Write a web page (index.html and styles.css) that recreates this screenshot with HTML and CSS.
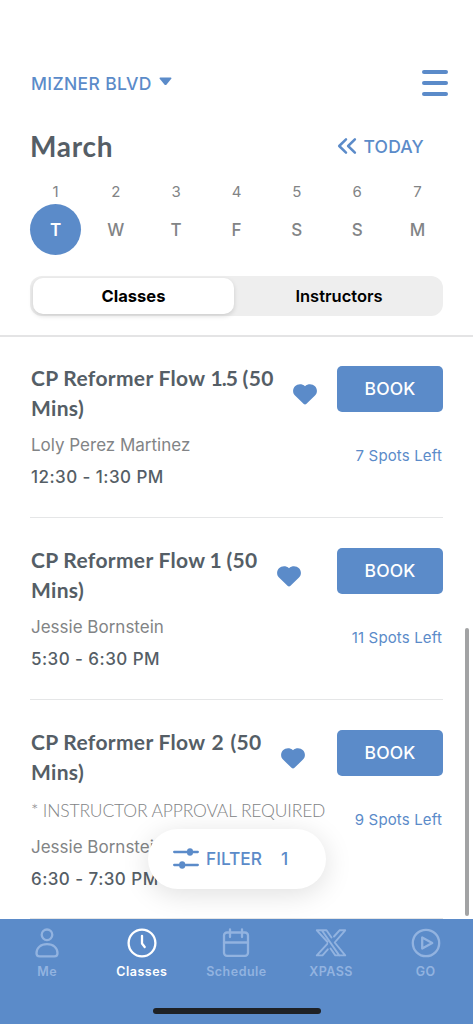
FILE: index.html
```html
<!DOCTYPE html>
<html lang="en">
<head>
<meta charset="utf-8">
<meta name="viewport" content="width=device-width, initial-scale=1">
<title>Classes</title>
<link rel="stylesheet" href="styles.css">
</head>
<body>
<div class="screen">
  <header class="header">
    <div class="topbar">
      <div class="location"><span>MIZNER BLVD</span>
        <svg class="caret" width="13" height="9" viewBox="0 0 13 9"><path d="M1.2 0.5H11.8Q13 0.8 12.3 1.8L7.6 7.4Q6.5 8.4 5.4 7.4L0.7 1.8Q0 0.8 1.2 0.5Z" fill="currentColor"/></svg>
      </div>
      <div class="burger"><i></i><i></i><i></i></div>
    </div>
    <div class="monthbar">
      <h1 class="month">March</h1>
      <div class="today">
        <svg width="20" height="18" viewBox="0 0 20 18" fill="none" stroke="currentColor" stroke-width="2.5" stroke-linecap="round" stroke-linejoin="round"><path d="M9 2.3L2.2 9L9 15.7M17.9 2.3L11.1 9L17.9 15.7"/></svg>
        <span>TODAY</span>
      </div>
    </div>
    <div class="days">
      <div class="day selected"><span class="num">1</span><span class="letter">T</span></div>
      <div class="day"><span class="num">2</span><span class="letter">W</span></div>
      <div class="day"><span class="num">3</span><span class="letter">T</span></div>
      <div class="day"><span class="num">4</span><span class="letter">F</span></div>
      <div class="day"><span class="num">5</span><span class="letter">S</span></div>
      <div class="day"><span class="num">6</span><span class="letter">S</span></div>
      <div class="day"><span class="num">7</span><span class="letter">M</span></div>
    </div>
    <div class="segmented"><span class="seg active">Classes</span><span class="seg">Instructors</span></div>
  </header>

  <main class="list">
    <article class="row">
      <div class="info">
        <div class="heading"><h2 class="title">CP Reformer Flow <span class="level">1.5</span> (50<br>Mins)</h2>
          <svg class="heart" width="24" height="21" viewBox="0 0 24 21"><path d="M12 2.200C9-.6 4.500-.3 2 2.300C-.5 5-.6 9 2 11.600L10.500 19.800Q12 21 13.500 19.800L22 11.600C24.600 9 24.500 5 22 2.300C19.500-.3 15-.6 12 2.200Z" fill="currentColor"/></svg></div>
        <p class="teacher">Loly Perez Martinez</p>
        <p class="time">12:30 - 1:30 PM</p>
      </div>
      <div class="side"><button class="book">BOOK</button><span class="spots">7 Spots Left</span></div>
    </article>
    <article class="row">
      <div class="info">
        <div class="heading"><h2 class="title">CP Reformer Flow <span class="one">1</span> (50<br>Mins)</h2>
          <svg class="heart" width="24" height="21" viewBox="0 0 24 21"><path d="M12 2.200C9-.6 4.500-.3 2 2.300C-.5 5-.6 9 2 11.600L10.500 19.800Q12 21 13.500 19.800L22 11.600C24.600 9 24.500 5 22 2.300C19.500-.3 15-.6 12 2.200Z" fill="currentColor"/></svg></div>
        <p class="teacher">Jessie Bornstein</p>
        <p class="time">5:30 - 6:30 PM</p>
      </div>
      <div class="side"><button class="book">BOOK</button><span class="spots">11 Spots Left</span></div>
    </article>
    <article class="row">
      <div class="info">
        <div class="heading"><h2 class="title">CP Reformer Flow <span class="two">2</span> (50<br>Mins)</h2>
          <svg class="heart" width="24" height="21" viewBox="0 0 24 21"><path d="M12 2.200C9-.6 4.500-.3 2 2.300C-.5 5-.6 9 2 11.600L10.500 19.800Q12 21 13.500 19.800L22 11.600C24.600 9 24.500 5 22 2.300C19.500-.3 15-.6 12 2.200Z" fill="currentColor"/></svg></div>
        <p class="note">* INSTRUCTOR APPROVAL REQUIRED</p>
        <p class="teacher">Jessie Bornstein</p>
        <p class="time">6:30 - 7:30 PM</p>
      </div>
      <div class="side"><button class="book">BOOK</button><span class="spots">9 Spots Left</span></div>
    </article>
    <div class="scrollbar"></div>
    <div class="filter">
      <svg width="26" height="22" viewBox="0 0 26 22" fill="none" stroke="currentColor" stroke-width="2.3" stroke-linecap="round"><path d="M1.200 5H24.800M1.200 18H24.800"/><g fill="currentColor" stroke="none"><rect x="14" y="1.200" width="6" height="7.600" rx="3"/><rect x="6.200" y="14.200" width="6" height="7.600" rx="3"/></g></svg>
      <span class="filter-label">FILTER</span><span>1</span>
    </div>
  </main>

  <nav class="tabbar">
    <div class="tabs">
      <div class="tab">
        <svg width="30" height="30" viewBox="0 0 30 30"><circle cx="15" cy="6.800" r="5.300"/><path d="M15 16.200C8.500 16.200 4.500 20 4.500 25.200Q4.500 28.300 7.600 28.300H22.400Q25.500 28.300 25.500 25.200C25.500 20 21.500 16.200 15 16.200Z"/></svg>
        <span>Me</span></div>
      <div class="tab on">
        <svg width="30" height="30" viewBox="0 0 30 30"><circle cx="15" cy="15" r="13.400"/><path d="M15 7.800V15.500L17.700 19"/></svg>
        <span>Classes</span></div>
      <div class="tab">
        <svg width="30" height="30" viewBox="0 0 30 30"><rect x="3" y="4.500" width="24" height="23.300" rx="3"/><path d="M3 14.500H27M9 1.400V9M21 1.400V9"/></svg>
        <span>Schedule</span></div>
      <div class="tab">
        <svg class="thin" width="32" height="30" viewBox="0 0 32 30"><path d="M12.500 14L1.800 2.300H11.500L16.500 9.500M19 8.500L24.500 2.300H30.200L19.700 14.500L30.200 27.400H20.300L15.500 20.500M12.800 21.300L7.500 27.400H1.800L12.300 15.800M6.800 2.300L24.200 27.400"/></svg>
        <span>XPASS</span></div>
      <div class="tab">
        <svg width="30" height="30" viewBox="0 0 30 30"><circle cx="15" cy="15" r="13.200"/><path d="M11.200 9.500V20.500L21.200 15Z"/></svg>
        <span>GO</span></div>
    </div>
    <div class="home"></div>
  </nav>
</div>
</body>
</html>
```
FILE: styles.css
```css
* { box-sizing: border-box; margin: 0; padding: 0; }
body { background: #fff; font-family: Inter, "Liberation Sans", sans-serif; color: #828486; }
svg { display: block; flex: none; }
.screen { width: 473px; height: 1024px; display: flex; flex-direction: column; overflow: hidden; }

.header { height: 337px; flex: none; padding: 69px 30px 0 30px; border-bottom: 2px solid #e4e4e5; }
.topbar { height: 28px; display: flex; justify-content: space-between; align-items: center; }
.location { display: flex; align-items: center; gap: 8px; color: #5b8bc9; font-size: 17.5px; font-weight: 500; letter-spacing: 0.35px; }
.caret { margin: -4px 0 0 -1px; }
.burger { width: 26px; height: 26px; margin-right: -5px; display: flex; flex-direction: column; justify-content: space-between; }
.burger i { height: 4px; border-radius: 2px; background: #5b8bc9; }
.monthbar { height: 40px; margin-top: 29px; display: flex; justify-content: space-between; align-items: center; padding-right: 19px; }
.month { font-family: Lato, sans-serif; font-size: 28px; font-weight: 700; letter-spacing: 0.7px; color: #555e66; }
.today { display: flex; align-items: center; gap: 6px; color: #5b8bc9; font-size: 17.5px; font-weight: 500; letter-spacing: 0.2px; }
.days { display: flex; justify-content: space-between; margin-top: 16px; }
.day { width: 51px; display: flex; flex-direction: column; align-items: center; }
.num { height: 22px; line-height: 20px; font-size: 15px; }
.letter { width: 51px; height: 51px; border-radius: 50%; display: flex; align-items: center; justify-content: center; font-size: 17px; font-weight: 500; }
.selected .letter { background: #5b8bc9; color: #fff; font-weight: 600; }
.segmented { height: 40px; margin-top: 21px; padding: 2px; display: flex; border-radius: 12px; background: #eee; }
.seg { flex: 1; display: flex; align-items: center; justify-content: center; padding-left: 3px; color: #000; font-size: 16.5px; font-weight: 600; }
.seg.active { flex: 0 0 201px; margin-left: 1px; padding-left: 0; border-radius: 10px; background: #fff; font-weight: 700; box-shadow: 0 2px 5px rgba(0, 0, 0, 0.14); }
.location { padding-left: 1px; }
.location .caret { margin-left: -2px; }
.location { gap: 9px; }

.list { position: relative; flex: 1; min-height: 0; overflow: hidden; margin-top: -1px; }
.row { height: 182px; margin: 0 30px; padding-top: 27px; border-bottom: 1px solid #e5e6e7; display: flex; justify-content: space-between; }
.row:nth-of-type(3) { height: 219px; }
.info { white-space: nowrap; padding-left: 1px; }
.heading { display: flex; align-items: center; gap: 19px; }
.title { font-family: Lato, sans-serif; font-size: 21px; line-height: 30.4px; font-weight: 700; letter-spacing: 0.32px; color: #555e66; }
.level { letter-spacing: -0.9px; }
.one { margin: 0 -1px; }
.two { margin: 0 1px; }
.heart { color: #5b8bc9; margin-top: 2px; }
.teacher { margin-top: 10px; height: 22px; line-height: 22px; font-size: 17px; }
.time { margin-top: 10px; line-height: 22px; font-size: 17px; font-weight: 500; letter-spacing: 0.45px; color: #555e66; }
.note { height: 22px; margin-top: 12px; line-height: 22px; font-family: Lato, sans-serif; font-size: 17.5px; font-weight: 300; letter-spacing: -0.17px; }
.note + .teacher { margin-top: 14px; }
.side { width: 106px; flex: none; padding-top: 3px; display: flex; flex-direction: column; align-items: flex-end; margin-left: -40px; }
.book { width: 106px; height: 46px; padding-bottom: 1px; border: 0; border-radius: 5px; background: #5b8bc9; color: #fff; font: 500 17.5px Inter, sans-serif; letter-spacing: 0.1px; }
.spots { margin: 34px 1px 0 0; line-height: 20px; font-size: 15px; letter-spacing: 0.15px; color: #5b8bc9; white-space: nowrap; }
.scrollbar { position: absolute; right: 4px; top: 292px; width: 4px; height: 288px; border-radius: 2px; background: #a2a3a4; }
.filter { position: absolute; left: 148px; top: 493px; width: 178px; height: 60px; padding: 0 25px 2px; border-radius: 30px; background: #fff; box-shadow: 0 5px 28px rgba(0, 0, 0, 0.13); display: flex; align-items: center; color: #5b8bc9; font-size: 17.3px; font-weight: 500; }
.filter-label { margin: 0 19px 0 7px; }

.tabbar { height: 105px; flex: none; background: #5b8bc9; padding-top: 9px; }
.tabs { display: flex; height: 80px; }
.tab { flex: 1; display: flex; flex-direction: column; align-items: center; color: #92b3e0; font-size: 12.5px; font-weight: 600; letter-spacing: 0.5px; }
.tab svg { fill: none; stroke: currentColor; stroke-width: 2.3; stroke-linecap: round; stroke-linejoin: round; }
.tab .thin { stroke-width: 1.9; }
.tab span { margin-top: 6px; line-height: 16px; }
.tab.on { color: #fff; }
.home { width: 168px; height: 6px; margin: 0 auto; border-radius: 3px; background: #1e2125; }
```
